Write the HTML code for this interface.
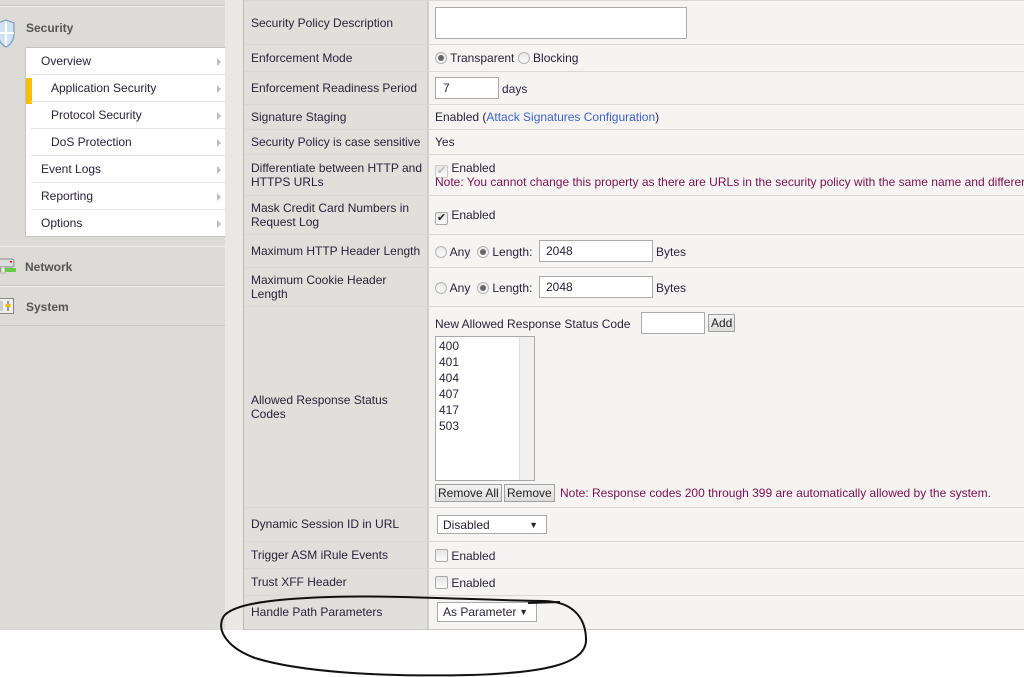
<!DOCTYPE html>
<html><head><meta charset="utf-8"><style>
*{margin:0;padding:0;box-sizing:border-box}
body{width:1024px;height:677px;background:#fff;font-family:"Liberation Sans",Arial,sans-serif;font-size:12px;color:#2a2238;position:relative;overflow:hidden}
.a{position:absolute}
#side{left:0;top:0;width:225px;height:630px;background:#dcdbd7}
#gap{left:225px;top:0;width:18px;height:630px;background:#e9e8e4}
.hdr{position:absolute;left:0;width:225px;border-bottom:1px solid #c8c7c3;border-top:1px solid #f0efeb;font-weight:bold;color:#555;font-size:12px}
#menu{left:25px;top:47px;width:200px;height:190px;border:1px solid #c4c3bf;border-right:none;background:#fff}
.mi{position:absolute;left:5px;width:194px;height:27px;border-bottom:1px solid #e4e3e0;line-height:26px;color:#2a2238;padding-left:10px}
.mi.s{padding-left:20px}
.mi:after{content:"";position:absolute;right:4px;top:10px;border-left:4px solid #bbb;border-top:4px solid transparent;border-bottom:4px solid transparent}
#tbl{left:243px;top:0;width:781px;height:630px;background:#f5f4f2;border-left:1px solid #bdbcb8}
#lab{left:244px;top:0;width:185px;height:630px;background:#e0dfdb;border-right:2px solid #cfceca}
.hl{position:absolute;left:244px;width:780px;height:1px;background:#d9d8d4}
.l{position:absolute;left:251px;width:168px;line-height:14px}
.nw{white-space:nowrap}
.v{position:absolute;left:435px;white-space:nowrap}
.inp{position:absolute;background:#fff;border:1px solid #a9a9a9}
.rad{display:inline-block;width:12px;height:12px;border-radius:50%;border:1px solid #b4b4b4;background:linear-gradient(#e8e8e8,#fafafa);vertical-align:-2px;position:relative}
.rad.on:after{content:"";position:absolute;left:2px;top:2px;width:6px;height:6px;border-radius:50%;background:#666}
.cb{display:inline-block;width:13px;height:13px;border:1px solid #aaa;border-radius:2px;background:linear-gradient(#e6e6e6,#fafafa);vertical-align:-2px;position:relative;font-size:11px;line-height:11px;text-align:center}
.note{color:#7a1050}
.btn{position:absolute;border:1px solid #a0a0a0;background:linear-gradient(#f2f2f2,#dcdcdc);line-height:16px;padding:0 2px;color:#222}
.sel{position:absolute;background:#fff;border:1px solid #a9a9a9;line-height:18px;padding-left:5px}
.sel b{position:absolute;right:8px;top:0;font-size:9px}
</style></head><body>
<div id="side" class="a"></div>
<div id="gap" class="a"></div>
<div class="hdr" style="top:0;height:6px;border-top:none"></div>
<div class="hdr" style="top:6px;height:41px;border-bottom:none"><span class="a" style="left:26px;top:14px">Security</span>
<svg class="a" style="left:-2px;top:12px" width="18" height="30" viewBox="0 0 18 30"><path d="M0 4 L8 1 L16 4 L16 14 Q16 24 8 28 Q0 24 0 14Z" fill="#cfe3f5" stroke="#7a9cc0" stroke-width="1.2"/><path d="M8 2 L8 27 M1 14 L16 14" stroke="#fff" stroke-width="2"/></svg></div>
<div id="menu" class="a">
<div class="a" style="left:0;top:30px;width:6px;height:26px;background:#f5c000"></div>
<div class="mi" style="top:0">Overview</div>
<div class="mi s" style="top:27px">Application Security</div>
<div class="mi s" style="top:54px">Protocol Security</div>
<div class="mi s" style="top:81px">DoS Protection</div>
<div class="mi" style="top:108px">Event Logs</div>
<div class="mi" style="top:135px">Reporting</div>
<div class="mi" style="top:162px;border-bottom:none">Options</div>
</div>
<div class="hdr" style="top:246px;height:40px"><span class="a" style="left:25px;top:13px">Network</span>
<svg class="a" style="left:-2px;top:11px" width="20" height="16"><rect x="0" y="1" width="16" height="8" rx="2" fill="#ddd" stroke="#888"/><rect x="12" y="3" width="2" height="1.5" fill="#d00"/><rect x="0" y="10" width="18" height="4" fill="#6c4"/><rect x="3" y="9" width="4" height="6" fill="#eee" stroke="#888" stroke-width=".6"/></svg></div>
<div class="hdr" style="top:286px;height:40px"><span class="a" style="left:26px;top:13px">System</span>
<svg class="a" style="left:-2px;top:11px" width="18" height="18"><rect x="0.5" y="0.5" width="15" height="15" fill="#eee" stroke="#888"/><rect x="9" y="3" width="2" height="10" fill="#999"/><rect x="7.5" y="6" width="5" height="3" fill="#eb0"/><rect x="2" y="3" width="3" height="10" fill="#ccc"/></svg></div>

<div id="tbl" class="a"></div>
<div id="lab" class="a"></div>
<div class="hl" style="top:0"></div>
<div class="hl" style="top:44px"></div>
<div class="hl" style="top:71px"></div>
<div class="hl" style="top:104px"></div>
<div class="hl" style="top:129px"></div>
<div class="hl" style="top:154px"></div>
<div class="hl" style="top:195px"></div>
<div class="hl" style="top:234px"></div>
<div class="hl" style="top:267px"></div>
<div class="hl" style="top:306px"></div>
<div class="hl" style="top:507px"></div>
<div class="hl" style="top:541px"></div>
<div class="hl" style="top:568px"></div>
<div class="hl" style="top:595px"></div>
<div class="hl" style="top:629px;background:#c8c7c3"></div>

<div class="l nw" style="top:16px">Security Policy Description</div>
<div class="inp" style="left:435px;top:7px;width:252px;height:32px"></div>
<div class="l nw" style="top:51px">Enforcement Mode</div>
<div class="v" style="top:51px"><span class="rad on"></span> Transparent <span class="rad"></span> Blocking</div>
<div class="l nw" style="top:81px">Enforcement Readiness Period</div>
<div class="inp" style="left:435px;top:77px;width:64px;height:22px;padding:3px 0 0 7px">7</div>
<div class="v" style="top:82px;left:502px">days</div>
<div class="l nw" style="top:110px">Signature Staging</div>
<div class="v" style="top:110px">Enabled (<span style="color:#3f62c8">Attack Signatures Configuration</span>)</div>
<div class="l nw" style="top:135px">Security Policy is case sensitive</div>
<div class="v" style="top:135px">Yes</div>
<div class="l" style="top:161px;width:178px">Differentiate between HTTP and HTTPS URLs</div>
<div class="v" style="top:161px"><span class="cb" style="color:#bbb;border-color:#ccc">✔</span> Enabled</div>
<div class="v note" style="top:175px;width:589px;overflow:hidden">Note: You cannot change this property as there are URLs in the security policy with the same name and different protocols.</div>
<div class="l" style="top:201px">Mask Credit Card Numbers in Request Log</div>
<div class="v" style="top:208px"><span class="cb" style="color:#222">✔</span> Enabled</div>
<div class="l nw" style="top:244px">Maximum HTTP Header Length</div>
<div class="v" style="top:245px"><span class="rad"></span> Any &nbsp;<span class="rad on"></span> Length:</div>
<div class="inp" style="left:539px;top:240px;width:114px;height:22px;padding:3px 0 0 6px">2048</div>
<div class="v" style="top:245px;left:656px">Bytes</div>
<div class="l" style="top:273px;width:150px">Maximum Cookie Header Length</div>
<div class="v" style="top:281px"><span class="rad"></span> Any &nbsp;<span class="rad on"></span> Length:</div>
<div class="inp" style="left:539px;top:276px;width:114px;height:22px;padding:3px 0 0 6px">2048</div>
<div class="v" style="top:281px;left:656px">Bytes</div>
<div class="l" style="top:393px;width:150px">Allowed Response Status Codes</div>
<div class="v" style="top:317px">New Allowed Response Status Code</div>
<div class="inp" style="left:641px;top:312px;width:64px;height:22px"></div>
<div class="btn" style="left:708px;top:314px">Add</div>
<div class="inp" style="left:435px;top:336px;width:100px;height:145px;line-height:16px;padding:1px 0 0 3px">400<br>401<br>404<br>407<br>417<br>503
<div class="a" style="right:0;top:0;width:15px;height:143px;background:#f0f0f0;border-left:1px solid #ddd"></div></div>
<div class="btn" style="left:435px;top:484px">Remove All</div>
<div class="btn" style="left:504px;top:484px">Remove</div>
<div class="v note" style="top:486px;left:560px">Note: Response codes 200 through 399 are automatically allowed by the system.</div>
<div class="l nw" style="top:517px">Dynamic Session ID in URL</div>
<div class="sel" style="left:437px;top:515px;width:110px;height:19px">Disabled<b>▼</b></div>
<div class="l nw" style="top:548px">Trigger ASM iRule Events</div>
<div class="v" style="top:549px"><span class="cb"></span> Enabled</div>
<div class="l nw" style="top:575px">Trust XFF Header</div>
<div class="v" style="top:576px"><span class="cb"></span> Enabled</div>
<div class="l nw" style="top:605px">Handle Path Parameters</div>
<div class="sel" style="left:437px;top:602px;width:100px;height:20px">As Parameter<b>▼</b></div>

<svg class="a" style="left:0;top:0" width="1024" height="677"><path d="M222 620 C225 606 262 599 330 597 C400 595 470 600 545 601 C575 602 586 620 586 640 C586 665 540 673 470 675 C380 677 300 672 255 658 C228 648 218 632 222 620 M528 603 L560 602" fill="none" stroke="#111" stroke-width="2"/></svg>
</body></html>
